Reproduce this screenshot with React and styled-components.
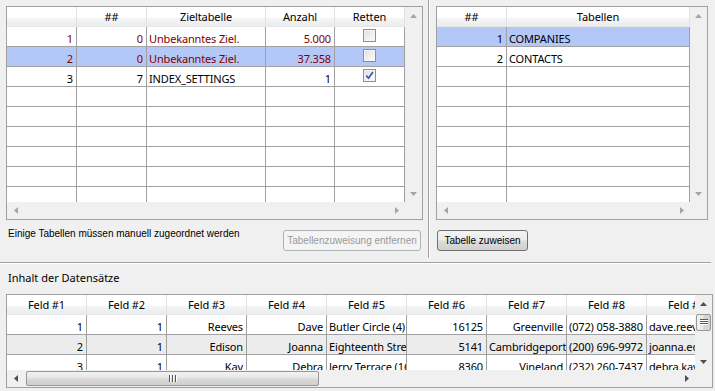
import React from 'react'
import styled, { createGlobalStyle, css } from 'styled-components'

const GRID_FONT = `'Noto Sans', 'DejaVu Sans', sans-serif`
const UI_FONT = `'Liberation Sans', Arial, sans-serif`

const ROW_H = 20
const HEADER_H = 20
const BAR = 17

const GlobalStyle = createGlobalStyle`
  html, body {
    margin: 0;
    padding: 0;
    background: #f0f0f0;
  }
  body {
    font-family: ${GRID_FONT};
    font-size: 11px;
    color: #000;
  }
  #root {
    width: 715px;
    height: 391px;
    overflow: hidden;
  }
  * {
    box-sizing: border-box;
  }
`

const leftColumns = [
  { key: 'rh', title: '', width: 70, align: 'right' },
  { key: 'nr', title: '##', width: 70, align: 'right' },
  { key: 'target', title: 'Zieltabelle', width: 119, align: 'left' },
  { key: 'count', title: 'Anzahl', width: 69, align: 'right' },
  { key: 'save', title: 'Retten', width: 70, align: 'center', check: true },
]

const leftRows = [
  { rh: '1', nr: '0', target: 'Unbekanntes Ziel.', count: '5.000', save: false, warn: true },
  { rh: '2', nr: '0', target: 'Unbekanntes Ziel.', count: '37.358', save: false, warn: true, selected: true },
  { rh: '3', nr: '7', target: 'INDEX_SETTINGS', count: '1', save: true },
]

const rightColumns = [
  { key: 'nr', title: '##', width: 70, align: 'right' },
  { key: 'name', title: 'Tabellen', width: 183, align: 'left' },
]

const rightRows = [
  { nr: '1', name: 'COMPANIES', selected: true },
  { nr: '2', name: 'CONTACTS' },
]

const fieldAligns = ['right', 'right', 'right', 'right', 'left', 'right', 'right', 'left', 'left']
const recordColumns = fieldAligns.map((align, i) => ({
  key: `f${i + 1}`,
  title: `Feld #${i + 1}`,
  width: 80,
  align,
}))

const toRecord = (values) =>
  values.reduce((acc, v, i) => ({ ...acc, [`f${i + 1}`]: v }), {})

const recordRows = [
  toRecord(['1', '1', 'Reeves', 'Dave', 'Butler Circle (4)', '16125', 'Greenville', '(072) 058-3880', 'dave.reeves@example.com']),
  { ...toRecord(['2', '1', 'Edison', 'Joanna', 'Eighteenth Street (9)', '5141', 'Cambridgeport', '(200) 696-9972', 'joanna.edison@example.com']), alt: true },
  toRecord(['3', '1', 'Kay', 'Debra', 'Jerry Terrace (16)', '8360', 'Vineland', '(232) 260-7437', 'debra.kay@example.com']),
]

export default function App() {
  return (
    <>
      <GlobalStyle />
      <Page>
        <TopArea>
          <Pane $width={425} $inset={6}>
            <DataGrid
              width={417}
              height={214}
              columns={leftColumns}
              rows={leftRows}
            />
            <ActionRow $spread>
              <Hint>Einige Tabellen müssen manuell zugeordnet werden</Hint>
              <Button disabled $width={138}>
                Tabellenzuweisung entfernen
              </Button>
            </ActionRow>
          </Pane>
          <Splitter>
            <EtchedLine />
          </Splitter>
          <Pane $width={284} $inset={5}>
            <DataGrid
              width={272}
              height={214}
              columns={rightColumns}
              rows={rightRows}
            />
            <ActionRow $indent={1}>
              <Button $width={91}>Tabelle zuweisen</Button>
            </ActionRow>
          </Pane>
        </TopArea>
        <Divider />
        <BottomArea>
          <SectionLabel>Inhalt der Datensätze</SectionLabel>
          <DataGrid
            width={707}
            height={94}
            columns={recordColumns}
            rows={recordRows}
            active
            vThumb
            hThumb={{ offset: 2, size: 293 }}
          />
        </BottomArea>
      </Page>
    </>
  )
}

const DataGrid = ({ width, height, columns, rows, active, vThumb, hThumb }) => {
  const bodyHeight = height - 2 - BAR - HEADER_H
  const rowCount = Math.max(rows.length, Math.ceil(bodyHeight / ROW_H))
  const filled = Array.from({ length: rowCount }, (_, i) => rows[i] || { empty: true })
  const arrowColor = active ? '#4f4f4f' : '#a6a6a6'

  return (
    <Frame $width={width} $height={height}>
      <Viewport>
        <HeaderRow>
          {columns.map((col) => (
            <HeaderCell key={col.key} $w={col.width}>
              {col.title}
            </HeaderCell>
          ))}
        </HeaderRow>
        {filled.map((row, r) => (
          <Row key={r} $selected={row.selected} $alt={row.alt} $warn={row.warn}>
            {columns.map((col) => (
              <Cell key={col.key} $w={col.width} $align={col.align}>
                {col.check && !row.empty ? <CheckBox checked={row[col.key]} /> : row[col.key]}
              </Cell>
            ))}
          </Row>
        ))}
      </Viewport>
      <VScroll>
        <ArrowBox>
          <Arrow dir='up' color={arrowColor} />
        </ArrowBox>
        <VTrack>
          {vThumb && (
            <VThumb>
              <Grip vertical />
            </VThumb>
          )}
        </VTrack>
        <ArrowBox>
          <Arrow dir='down' color={arrowColor} />
        </ArrowBox>
      </VScroll>
      <HScroll>
        <ArrowBox>
          <Arrow dir='left' color={arrowColor} />
        </ArrowBox>
        <HTrack>
          {hThumb && (
            <HThumb $offset={hThumb.offset} $size={hThumb.size}>
              <Grip />
            </HThumb>
          )}
        </HTrack>
        <ArrowBox>
          <Arrow dir='right' color={arrowColor} />
        </ArrowBox>
      </HScroll>
      <Corner />
    </Frame>
  )
}

const arrowPoints = {
  up: '0,4 3.5,0 7,4',
  down: '0,0 3.5,4 7,0',
  left: '4,0 0,3.5 4,7',
  right: '0,0 4,3.5 0,7',
}

const Arrow = ({ dir, color }) => {
  const horizontal = dir === 'left' || dir === 'right'
  const w = horizontal ? 4 : 7
  const h = horizontal ? 7 : 4
  return (
    <svg width={w} height={h} viewBox={`0 0 ${w} ${h}`}>
      <polygon points={arrowPoints[dir]} fill={color} />
    </svg>
  )
}

const Grip = ({ vertical }) =>
  vertical ? (
    <svg width='8' height='7' viewBox='0 0 8 7'>
      {[0, 2, 4].map((y) => (
        <g key={y}>
          <rect x='0' y={y} width='8' height='1' fill='#5a5a5a' />
          <rect x='0' y={y + 1} width='8' height='1' fill='#ffffff' />
        </g>
      ))}
    </svg>
  ) : (
    <svg width='8' height='7' viewBox='0 0 8 7'>
      {[0, 3, 6].map((x) => (
        <g key={x}>
          <rect x={x} y='0' width='1' height='7' fill='#555555' />
          <rect x={x + 1} y='0' width='1' height='7' fill='#ffffff' />
        </g>
      ))}
    </svg>
  )

const CheckBox = ({ checked }) => (
  <CheckFrame>
    {checked && (
      <svg width='11' height='11' viewBox='0 0 11 11'>
        <path d='M2.3 5.6 L4.5 8.2 L8.9 2' stroke='#3d5aa0' strokeWidth='1.7' fill='none' />
      </svg>
    )}
  </CheckFrame>
)

const Page = styled.div`
  width: 715px;
  height: 391px;
  display: flex;
  flex-direction: column;
  background: #f0f0f0;
`

const TopArea = styled.div`
  display: flex;
  height: 258px;
`

const Pane = styled.div`
  display: flex;
  flex-direction: column;
  width: ${({ $width }) => $width}px;
  padding: 6px 0 0 ${({ $inset }) => $inset}px;
`

const Splitter = styled.div`
  width: 6px;
  display: flex;
  padding-left: 3px;
`

const EtchedLine = styled.div`
  width: 2px;
  height: 100%;
  border-left: 1px solid #a0a0a0;
  border-right: 1px solid #ffffff;
`

const Divider = styled.div`
  width: 711px;
  height: 2px;
  margin-top: 4px;
  border-top: 1px solid #a0a0a0;
  border-bottom: 1px solid #ffffff;
`

const ActionRow = styled.div`
  display: flex;
  align-items: flex-start;
  width: 417px;
  padding-left: ${({ $indent }) => $indent || 0}px;
  ${({ $spread }) =>
    $spread &&
    css`
      justify-content: space-between;
      padding-right: 2px;
    `}
`

const Hint = styled.span`
  font-family: ${UI_FONT};
  font-size: 10px;
  line-height: 13px;
  margin-top: 7px;
  padding-left: 2px;
  white-space: nowrap;
`

const Button = styled.button`
  width: ${({ $width }) => $width}px;
  height: 21px;
  margin-top: 10px;
  padding: 0 3px;
  font-family: ${UI_FONT};
  font-size: 10px;
  white-space: nowrap;
  border-radius: 3px;
  border: 1px solid #707070;
  color: #000;
  background: linear-gradient(to bottom, #f3f3f3 0%, #ebebeb 48%, #dddddd 52%, #cfcfcf 100%);

  &:disabled {
    border-color: #adb2b5;
    color: #9a9a9a;
    background: #f4f4f4;
  }
`

const BottomArea = styled.div`
  display: flex;
  flex-direction: column;
  padding: 7px 0 0 6px;
`

const SectionLabel = styled.div`
  font-family: ${GRID_FONT};
  font-size: 11px;
  line-height: 13px;
  padding-left: 2px;
  margin-bottom: 10px;
`

const Frame = styled.div`
  width: ${({ $width }) => $width}px;
  height: ${({ $height }) => $height}px;
  border: 1px solid #a0a0a0;
  background: #ffffff;
  display: grid;
  grid-template-columns: minmax(0, 1fr) ${BAR}px;
  grid-template-rows: minmax(0, 1fr) ${BAR}px;
`

const Viewport = styled.div`
  overflow: hidden;
  background: #ffffff;
`

const HeaderRow = styled.div`
  display: flex;
  height: ${HEADER_H}px;
  background: linear-gradient(to bottom, #ffffff 0%, #ffffff 55%, #f4f5f7 60%, #ebecee 100%);
  border-bottom: 1px solid #e6e6e6;
`

const HeaderCell = styled.div`
  flex: 0 0 ${({ $w }) => $w}px;
  border-right: 1px solid #e1e2e4;
  text-align: center;
  line-height: ${HEADER_H - 1}px;
  letter-spacing: -0.1px;
  white-space: nowrap;
  overflow: hidden;
`

const Row = styled.div`
  display: flex;
  height: ${ROW_H}px;
  color: ${({ $warn }) => ($warn ? '#800000' : '#000')};
  background: ${({ $selected, $alt }) => ($selected ? '#b4c8f8' : $alt ? '#ececec' : '#ffffff')};
`

const Cell = styled.div`
  flex: 0 0 ${({ $w }) => $w}px;
  height: ${ROW_H}px;
  padding: 4px 3px 0 2px;
  line-height: 15px;
  letter-spacing: -0.15px;
  text-align: ${({ $align }) => $align};
  white-space: nowrap;
  overflow: hidden;
  border-right: 1px solid #a0a0a0;
  border-bottom: 1px solid #a0a0a0;
`

const CheckFrame = styled.span`
  display: inline-flex;
  align-items: center;
  justify-content: center;
  width: 13px;
  height: 13px;
  margin-top: -2px;
  vertical-align: top;
  border: 1px solid #8f8f8f;
  box-shadow: inset 0 0 0 1px #f4f4f4;
  background: linear-gradient(135deg, #dcdde0 0%, #f2f2f2 60%, #fbfbfb 100%);
`

const VScroll = styled.div`
  grid-row: 1;
  grid-column: 2;
  display: flex;
  flex-direction: column;
  background: #f0f0f0;
`

const HScroll = styled.div`
  grid-row: 2;
  grid-column: 1;
  display: flex;
  background: #f0f0f0;
`

const Corner = styled.div`
  grid-row: 2;
  grid-column: 2;
  background: #f0f0f0;
`

const ArrowBox = styled.div`
  flex: 0 0 ${BAR}px;
  width: ${BAR}px;
  height: ${BAR}px;
  display: flex;
  align-items: center;
  justify-content: center;
`

const VTrack = styled.div`
  flex: 1;
  padding: 2px 1px 0 1px;
`

const HTrack = styled.div`
  flex: 1;
  display: flex;
  padding: 1px 0;
`

const thumbBase = css`
  display: flex;
  align-items: center;
  justify-content: center;
  border: 1px solid #979797;
  border-radius: 2px;
`

const VThumb = styled.div`
  ${thumbBase}
  width: 15px;
  height: 17px;
  background: linear-gradient(to right, #f2f2f2 0%, #e6e6e6 48%, #d8d8d8 52%, #d0d0d0 100%);
`

const HThumb = styled.div`
  ${thumbBase}
  margin-left: ${({ $offset }) => $offset}px;
  width: ${({ $size }) => $size}px;
  height: 15px;
  background: linear-gradient(to bottom, #f2f2f2 0%, #e6e6e6 48%, #d8d8d8 52%, #d0d0d0 100%);
`
